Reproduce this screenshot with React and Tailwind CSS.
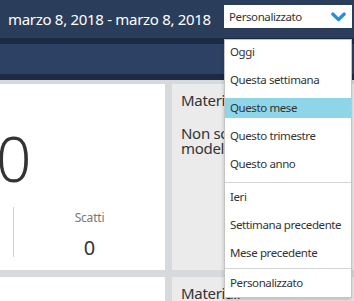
export default function App() {
  const font = { fontFamily: '"Noto Sans", "Open Sans", sans-serif' };
  const group1 = ["Oggi", "Questa settimana", "Questo mese", "Questo trimestre", "Questo anno"];
  const group2 = ["Ieri", "Settimana precedente", "Mese precedente"];
  const Item = ({ label }) => (
    <div
      className={
        "h-[20px] leading-[20px] pl-[5px] text-[11.5px] tracking-[-0.4px] text-[#333] whitespace-nowrap " +
        (label === "Questo mese" ? "bg-[#8dd5e7]" : "")
      }
    >
      {label}
    </div>
  );
  return (
    <div className="relative w-[354px] h-[301px] overflow-hidden bg-[#d6dadd]" style={font}>
      <div className="h-[38px] bg-[#2a3e5c] flex items-center pl-[8px]">
        <span className="text-[15px] tracking-[-0.3px] text-white whitespace-nowrap">marzo 8, 2018 - marzo 8, 2018</span>
      </div>
      <div className="h-[6px] bg-[#1c2b43]" />
      <div className="h-[30px] bg-[#2c4163]" />
      <div className="h-[6px] bg-[#1c2b43]" />
      <div className="h-[4px] bg-[#d6dadd]" />
      <div className="grid grid-cols-[165px_182px] gap-x-[7px] gap-y-[7px]">
        <div className="h-[186px] bg-white flex flex-col">
          <div className="h-[123px] relative overflow-hidden">
            <span className="absolute left-[-4px] top-[43px] text-[62px] leading-none font-light text-[#333]">0</span>
          </div>
          <div className="flex h-[50px]">
            <div className="w-[13px]" />
            <div className="w-px bg-[#c3d4e6]" />
            <div className="flex-1 flex flex-col items-center">
              <span className="text-[12px] tracking-[-0.2px] text-[#777] leading-none mt-[5px]">Scatti</span>
              <span className="text-[20px] text-[#333] leading-none mt-[14px]">0</span>
            </div>
          </div>
        </div>
        <div className="h-[186px] bg-[#ebebeb] pl-[9px] pt-[7px] text-[15px] tracking-[-0.3px] text-[#333] overflow-hidden">
          <div className="leading-[18px] whitespace-nowrap">Materiali</div>
          <div className="mt-[17px] leading-[15px] whitespace-nowrap">
            Non sono disponibili
            <br />
            modelli
          </div>
        </div>
        <div className="h-[40px] bg-white" />
        <div className="h-[40px] bg-[#ebebeb] pl-[9px] pt-[7px] text-[15px] tracking-[-0.3px] text-[#333] overflow-hidden">
          <div className="leading-[18px] whitespace-nowrap">Materiali</div>
        </div>
      </div>

      <div className="absolute left-[224px] top-[5px] w-[128px] h-[23px] bg-white flex items-center justify-between pl-[5px] pr-[6px]">
        <span className="text-[11.5px] tracking-[-0.4px] text-[#333]">Personalizzato</span>
        <svg width="15" height="10" viewBox="0 0 15 10">
          <polyline points="1.8,2 7.5,7.6 13.2,2" fill="none" stroke="#1f8fe0" strokeWidth="3.2" strokeLinecap="round" strokeLinejoin="round" />
        </svg>
      </div>

      <div className="absolute left-[224px] top-[39px] w-[128px] bg-white border border-[#c4c4c4] shadow-[0_2px_4px_rgba(0,0,0,0.2)]">
        <div className="flex flex-col gap-[8px] pt-[2px] pb-[8px]">
          {group1.map((l) => (
            <Item key={l} label={l} />
          ))}
        </div>
        <div className="h-px bg-[#d4d4d4]" />
        <div className="flex flex-col gap-[8px] pt-[4px] pb-[5px]">
          {group2.map((l) => (
            <Item key={l} label={l} />
          ))}
        </div>
        <div className="h-px bg-[#d4d4d4]" />
        <div className="pt-[4px] pb-[4px]">
          <Item label="Personalizzato" />
        </div>
      </div>
    </div>
  );
}
